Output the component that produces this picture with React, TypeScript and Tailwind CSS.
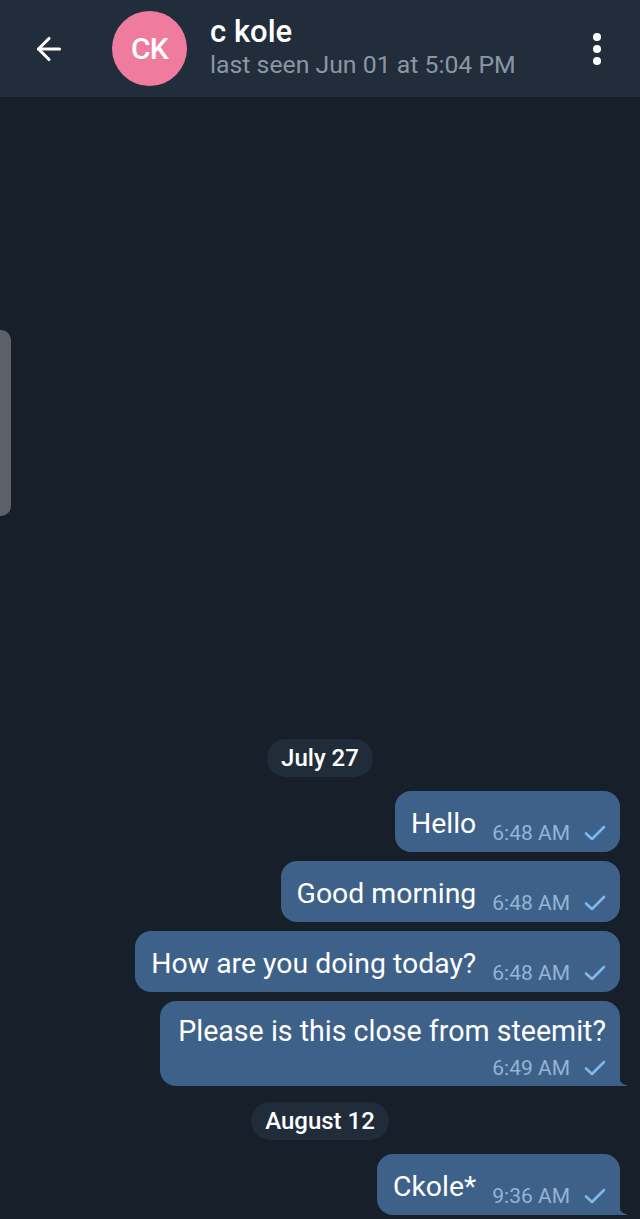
import { ArrowLeft } from 'lucide-react';

type Msg = { text: string; time: string; tail?: boolean; wrap?: boolean };

const groups: { date: string; msgs: Msg[] }[] = [
  {
    date: 'July 27',
    msgs: [
      { text: 'Hello', time: '6:48 AM' },
      { text: 'Good morning', time: '6:48 AM' },
      { text: 'How are you doing today?', time: '6:48 AM' },
      { text: 'Please is this close from steemit?', time: '6:49 AM', tail: true, wrap: true },
    ],
  },
  {
    date: 'August 12',
    msgs: [{ text: 'Ckole*', time: '9:36 AM', tail: true }],
  },
];

function Check() {
  return (
    <svg width="22" height="18" viewBox="0 0 22 18" className="ml-[14px] mb-[3px]">
      <path d="M2 9.5 L8 15 L20 3" fill="none" stroke="#7db8ef" strokeWidth="2.6" strokeLinecap="round" strokeLinejoin="round" />
    </svg>
  );
}

function Meta({ time }: { time: string }) {
  return (
    <div className="flex items-end shrink-0">
      <span className="text-[21px] leading-[24px] text-[#93b4d6]">{time}</span>
      <Check />
    </div>
  );
}

function Bubble({ m }: { m: Msg }) {
  const shape = m.tail ? 'rounded-[16px] rounded-br-[4px]' : 'rounded-[16px]';
  return (
    <div className={`relative bg-[#3e618a] ${shape} pr-[14px] ${m.wrap ? 'pl-[18px]' : 'pl-[16px]'}`}>
      {m.wrap ? (
        <div className="flex flex-col items-end pt-[12px] pb-[6px]">
          <span className="text-[28.6px] leading-[36px] text-white">{m.text}</span>
          <div className="mt-[7px]">
            <Meta time={m.time} />
          </div>
        </div>
      ) : (
        <div className="flex items-end h-[61px] pb-[7px]">
          <span className="text-[28.4px] leading-[36px] text-white mb-[3px]">{m.text}</span>
          <div className="ml-[16px]">
            <Meta time={m.time} />
          </div>
        </div>
      )}
      {m.tail && (
        <svg width="10" height="14" viewBox="0 0 10 14" className="absolute -right-[8px] bottom-0">
          <path d="M0 0 C0 8 3 12 9 13.5 L9 14 L0 14 Z" fill="#3e618a" />
        </svg>
      )}
    </div>
  );
}

export default function App() {
  return (
    <div className="relative w-[640px] h-[1219px] flex flex-col bg-[#17202a] overflow-hidden" style={{ fontFamily: 'Roboto, "Liberation Sans", sans-serif' }}>
      {/* Header */}
      <div className="h-[97px] shrink-0 bg-[#212d3b] flex items-center">
        <ArrowLeft className="ml-[31px] w-[36px] h-[36px] text-white" strokeWidth={2.1} />
        <div className="ml-[45px] w-[75px] h-[75px] rounded-full bg-[#ef7b9f] flex items-center justify-center">
          <span className="text-white text-[30px] font-medium tracking-tight">CK</span>
        </div>
        <div className="ml-[23px] flex-1 flex flex-col -mt-[2px]">
          <span className="text-white text-[31px] leading-[34px] font-medium">c kole</span>
          <span className="text-[#8a96a4] text-[24.8px] leading-[32px]">last seen Jun 01 at 5:04 PM</span>
        </div>
        <div className="mr-[39px] flex flex-col gap-[4px]">
          <span className="w-[8px] h-[8px] rounded-full bg-white" />
          <span className="w-[8px] h-[8px] rounded-full bg-white" />
          <span className="w-[8px] h-[8px] rounded-full bg-white" />
        </div>
      </div>

      {/* Edge handle */}
      <div className="absolute left-0 top-[330px] w-[11px] h-[186px] bg-[#5c6068] rounded-r-[10px]" />

      {/* Messages */}
      <div className="flex-1 flex flex-col justify-end pb-[4px]">
        {groups.map((g, gi) => (
          <div key={g.date} className={`flex flex-col ${gi > 0 ? 'mt-[16px]' : ''}`}>
            <div className="flex justify-center">
              <div className="h-[38px] px-[14px] rounded-full bg-[#202c39] flex items-center">
                <span className="text-white text-[24px] font-medium">{g.date}</span>
              </div>
            </div>
            <div className="mt-[14px] flex flex-col items-end gap-[9px] pr-[20px]">
              {g.msgs.map((m, i) => (
                <Bubble key={i} m={m} />
              ))}
            </div>
          </div>
        ))}
      </div>
    </div>
  );
}
